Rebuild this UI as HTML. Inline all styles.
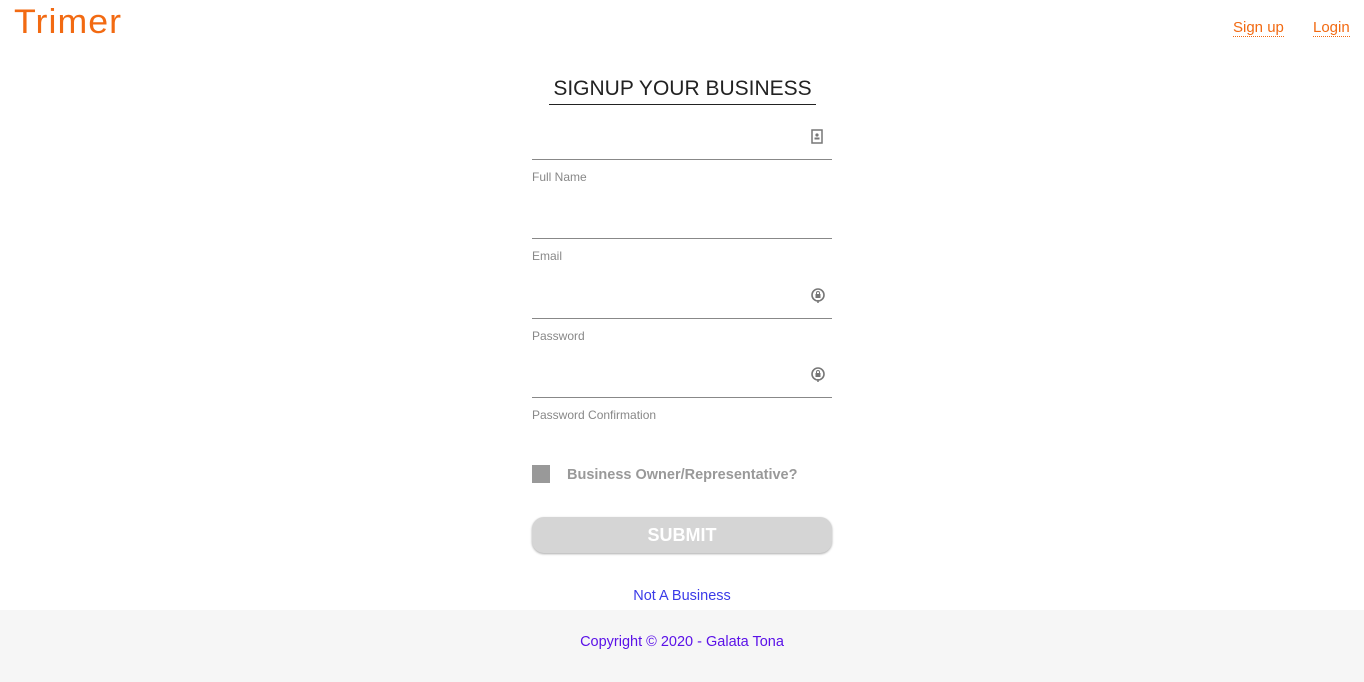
<!DOCTYPE html>
<html><head><meta charset="utf-8"><style>
body{margin:0;width:1364px;height:682px;background:#fff;font-family:"Liberation Sans",sans-serif;position:relative;overflow:hidden}
.logo{position:absolute;left:14px;top:3px;font-family:"Liberation Sans",sans-serif;font-size:34px;color:#f26a12;letter-spacing:1px;transform:scaleX(1.05);transform-origin:left}
.nav{position:absolute;top:19px;font-size:15px;color:#f26a12;border-bottom:1px dotted #f26a12;line-height:17px}
h1{position:absolute;left:549px;top:76px;margin:0;font-weight:normal;font-size:21px;color:#222;border-bottom:1px solid #222;padding-bottom:2px;line-height:26px;width:267px;text-align:center;white-space:nowrap}
.line{position:absolute;left:532px;width:300px;height:1px;background:#888}
.lab{position:absolute;left:532px;font-size:12px;color:#888}
.ic{position:absolute;left:810px}
.cb{position:absolute;left:532px;top:465px;width:18px;height:18px;background:#999}
.cbl{position:absolute;left:567px;top:467px;font-size:14.5px;font-weight:bold;color:#999}
.btn{position:absolute;left:532px;top:517px;width:300px;height:36px;border-radius:12px;background:#d5d5d5;color:#fff;font-size:18px;font-weight:bold;text-align:center;line-height:36px;box-shadow:0 1px 2px #aaa}
.nb{position:absolute;left:0;width:1364px;top:588px;text-align:center;font-size:14.5px;color:#3a3ae8}
.foot{position:absolute;left:0;top:610px;width:1364px;height:72px;background:#f6f6f6;text-align:center;font-size:14.5px;color:#5b12e8;line-height:64px}
</style></head><body>
<div class="logo">Trimer</div>
<div class="nav" style="left:1233px">Sign up</div>
<div class="nav" style="left:1313px">Login</div>
<h1>SIGNUP YOUR BUSINESS</h1>
<svg class="ic" style="top:129px" width="14" height="16" viewBox="0 0 14 16"><rect x="2" y="1" width="10" height="13" fill="none" stroke="#777" stroke-width="1.5"/><circle cx="7" cy="6" r="1.6" fill="#777"/><rect x="4.5" y="8.5" width="5" height="2" fill="#777"/></svg>
<div class="line" style="top:159px"></div><div class="lab" style="top:170px">Full Name</div>
<div class="line" style="top:238px"></div><div class="lab" style="top:249px">Email</div>
<svg class="ic" style="top:287px" width="16" height="18" viewBox="0 0 16 18"><circle cx="8" cy="8" r="6" fill="none" stroke="#777" stroke-width="1.6"/><rect x="5.5" y="7" width="5" height="4" fill="#777"/><path d="M6.5 7V6a1.5 1.5 0 0 1 3 0v1" fill="none" stroke="#777"/><path d="M8 13v3" stroke="#777" stroke-width="1.5"/></svg>
<div class="line" style="top:318px"></div><div class="lab" style="top:329px">Password</div>
<svg class="ic" style="top:366px" width="16" height="18" viewBox="0 0 16 18"><circle cx="8" cy="8" r="6" fill="none" stroke="#777" stroke-width="1.6"/><rect x="5.5" y="7" width="5" height="4" fill="#777"/><path d="M6.5 7V6a1.5 1.5 0 0 1 3 0v1" fill="none" stroke="#777"/><path d="M8 13v3" stroke="#777" stroke-width="1.5"/></svg>
<div class="line" style="top:397px"></div><div class="lab" style="top:408px">Password Confirmation</div>
<div class="cb"></div><div class="cbl">Business Owner/Representative?</div>
<div class="btn">SUBMIT</div>
<div class="nb">Not A Business</div>
<div class="foot">Copyright © 2020 - Galata Tona</div>
</body></html>
